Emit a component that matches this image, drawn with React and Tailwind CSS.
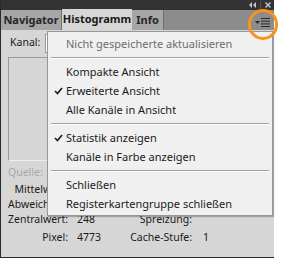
import React from 'react';

const font = { fontFamily: '"Noto Sans", "Open Sans", sans-serif' };

function Item({ children, checked, disabled }) {
  return (
    <div className="h-[19px] flex items-center relative">
      {checked && (
        <svg className="absolute left-[6px] top-[6px]" width="9" height="8" viewBox="0 0 9 8">
          <path d="M1 4 L3.5 6.5 L8 1" stroke="#1a1a1a" strokeWidth="1.6" fill="none" />
        </svg>
      )}
      <span className={`pl-[18px] text-[11px] leading-none ${disabled ? 'text-[#6d6d6d]' : 'text-[#1a1a1a]'}`}>{children}</span>
    </div>
  );
}

function Sep() {
  return (
    <div className="h-[9px] flex flex-col justify-center px-[3px]">
      <div className="h-px bg-[#a0a0a0]" />
      <div className="h-px bg-white" />
    </div>
  );
}

export default function App() {
  return (
    <div className="w-[281px] h-[259px] bg-white relative overflow-hidden" style={font}>
      <div className="w-[274px] h-[258px] flex flex-col border-l border-b border-[#2a2a2a] bg-[#d6d6d6]">
        {/* title strip */}
        <div className="h-[10px] bg-[#333333] flex justify-end items-center gap-[4px] pr-[3px]">
          <svg width="7" height="6" viewBox="0 0 7 6"><path d="M3 0 L0 3 L3 6Z M7 0 L4 3 L7 6Z" fill="#c8c8c8" /></svg>
          <div className="w-px h-[8px] bg-[#555]" />
          <svg width="6" height="6" viewBox="0 0 6 6"><path d="M0.5 0.5 L5.5 5.5 M5.5 0.5 L0.5 5.5" stroke="#c8c8c8" strokeWidth="1.4" /></svg>
        </div>
        {/* tabs */}
        <div className="h-[21px] bg-[#8c8c8c] flex items-end border-b border-[#d6d6d6]">
          <div className="h-[20px] w-[61px] bg-[#a6a6a6] border-r border-[#6f6f6f] flex items-center justify-center text-[11px] font-bold text-[#262626]">Navigator</div>
          <div className="h-[21px] w-[70px] bg-[#d6d6d6] flex items-center justify-center text-[11px] font-bold text-[#1a1a1a]">Histogramm</div>
          <div className="h-[20px] w-[32px] bg-[#a6a6a6] border-r border-[#6f6f6f] flex items-center justify-center text-[11px] font-bold text-[#262626]">Info</div>
        </div>
        {/* content */}
        <div className="flex-1 flex flex-col text-[10.5px] text-[#1a1a1a] px-[7px] pt-[2px]">
          <div className="flex items-center gap-[5px] h-[20px]">
            <span className="pl-[2px]">Kanal:</span>
            <div className="w-[40px] h-[19px] bg-white border border-[#999]" />
          </div>
          <div className="mt-[4px] h-[104px] w-[260px] border border-[#9a9a9a] border-r-[#eee] border-b-[#eee]" />
          <div className="flex items-center gap-[5px] h-[18px] mt-[3px] text-[#a8a8a8]">
            <span>Quelle:</span>
            <div className="w-[20px] h-[16px] border border-[#b8b8b8]" />
          </div>
          <div className="grid grid-cols-[60px_59px_65px_auto] leading-[15px]">
            <span className="text-right">Mittelwert:</span><span></span><span></span><span></span>
            <span className="text-right">Abweichung:</span><span></span><span></span><span></span>
            <span className="text-right">Zentralwert:</span><span className="pl-[9px]">248</span><span className="text-right">Spreizung:</span><span></span>
            <span className="text-right mt-[3px]">Pixel:</span><span className="pl-[9px] mt-[3px]">4773</span><span className="text-right mt-[3px]">Cache-Stufe:</span><span className="pl-[11px] mt-[3px]">1</span>
          </div>
        </div>
      </div>

      {/* options menu */}
      <div className="absolute left-[47px] top-[31px] w-[226px] bg-[#f0f0f0] border border-[#979797] py-[2px] shadow-[1px_1px_1px_rgba(0,0,0,0.25)]">
        <Item disabled>Nicht gespeicherte aktualisieren</Item>
        <Sep />
        <Item>Kompakte Ansicht</Item>
        <Item checked>Erweiterte Ansicht</Item>
        <Item>Alle Kanäle in Ansicht</Item>
        <Sep />
        <Item checked>Statistik anzeigen</Item>
        <Item>Kanäle in Farbe anzeigen</Item>
        <Sep />
        <Item>Schließen</Item>
        <Item>Registerkartengruppe schließen</Item>
      </div>

      {/* panel menu icon with highlight ring */}
      <div className="absolute left-[255px] top-[18px] flex items-center gap-[1px]">
        <svg width="5" height="3" viewBox="0 0 5 3"><path d="M0 0 H5 L2.5 3Z" fill="#2a2a2a" /></svg>
        <svg width="9" height="9" viewBox="0 0 9 9">
          <rect y="0" width="9" height="1" fill="#2a2a2a" />
          <rect y="2.7" width="9" height="1" fill="#2a2a2a" />
          <rect y="5.4" width="9" height="1" fill="#2a2a2a" />
          <rect y="8" width="9" height="1" fill="#2a2a2a" />
        </svg>
      </div>
      <div className="absolute left-[248px] top-[9px] w-[30px] h-[31px] rounded-full border-[3px] border-[#f7931e]" />
    </div>
  );
}
